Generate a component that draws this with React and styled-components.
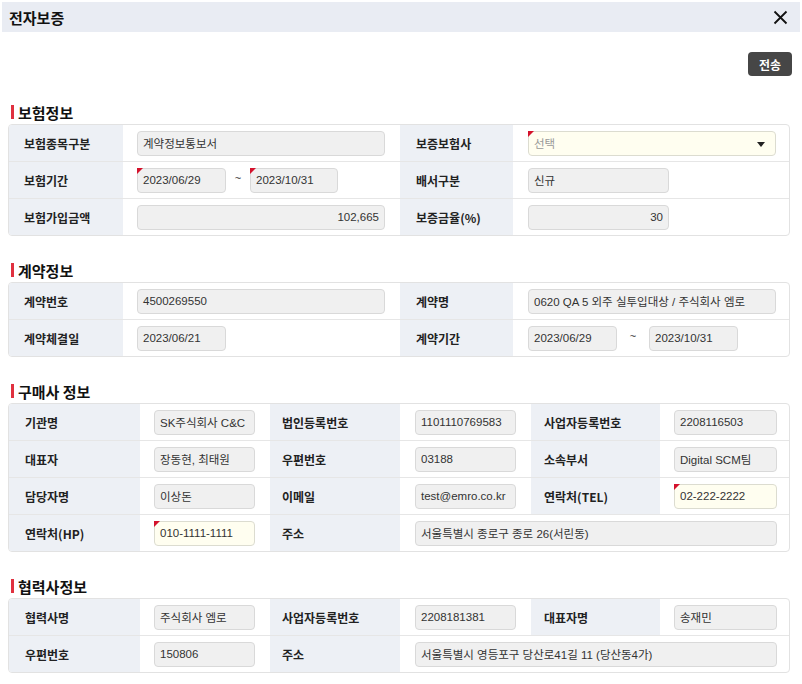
import React from "react";
import styled, { createGlobalStyle } from "styled-components";

const Global = createGlobalStyle`
  html, body { margin: 0; padding: 0; background: #fff; }
  body { font-family: "Liberation Sans", "Noto Sans CJK KR", sans-serif; color: #222; }
  * { box-sizing: border-box; }
`;

const Page = styled.div`
  width: 802px;
  height: 684px;
  padding: 2px 0 0 2px;
  overflow: hidden;
`;

const Header = styled.div`
  width: 798px;
  height: 30px;
  background: #e9ecf3;
  display: flex;
  align-items: center;
  justify-content: space-between;
  padding: 0 12px 0 7px;
`;

const Title = styled.h1`
  margin: 0;
  font-family: "Noto Sans CJK KR", sans-serif;
  font-size: 15px;
  font-weight: 700;
  color: #111;
`;

const CloseButton = styled.button`
  border: none;
  background: transparent;
  padding: 0;
  width: 15px;
  height: 15px;
  display: flex;
  cursor: pointer;
`;

const Toolbar = styled.div`
  width: 798px;
  display: flex;
  justify-content: flex-end;
  padding-right: 8px;
  margin-top: 20px;
`;

const SendButton = styled.button`
  width: 44px;
  height: 24px;
  border: none;
  border-radius: 4px;
  background: #464646;
  color: #fff;
  font-family: "Noto Sans CJK KR", sans-serif;
  font-weight: 700;
  font-size: 12px;
  padding: 0;
`;

const Content = styled.div`
  padding: 0 12px 0 6px;
`;

const Section = styled.section`
  margin-top: ${(p) => (p.$first ? 26 : 24)}px;
`;

const Heading = styled.h2`
  margin: 0 0 2px;
  height: 20px;
  display: flex;
  align-items: center;
  gap: 4px;
  padding-left: 3px;
  font-family: "Noto Sans CJK KR", sans-serif;
  font-size: 15px;
  font-weight: 700;
  color: #111;
  &::before {
    content: "";
    width: 3px;
    height: 14px;
    background: #e0313f;
  }
`;

const Table = styled.div`
  border: 1px solid #e2e2e2;
  border-radius: 4px;
  overflow: hidden;
`;

const Row = styled.div`
  display: grid;
  grid-template-columns: ${(p) => p.$cols};
  height: 36px;
  & + & { border-top: 1px solid #e6e6e6; height: 37px; }
`;

const Label = styled.div`
  background: #edf0f5;
  display: flex;
  align-items: center;
  padding-left: ${(p) => p.$pad ?? 15}px;
  font-family: "Noto Sans CJK KR", sans-serif;
  font-size: 12px;
  font-weight: 700;
  color: #222;
  white-space: nowrap;
`;

const Cell = styled.div`
  display: flex;
  align-items: center;
  padding: 0 ${(p) => p.$pr ?? 14}px 0 ${(p) => p.$pl ?? 14}px;
  grid-column: span ${(p) => p.$span ?? 1};
  min-width: 0;
`;

const Field = styled.div`
  position: relative;
  height: 25px;
  ${(p) => (p.$w ? `width: ${p.$w}px; flex: none;` : `flex: 1;`)}
  min-width: 0;
  display: flex;
  align-items: center;
  justify-content: ${(p) => (p.$right ? "flex-end" : "flex-start")};
  padding: 0 5px;
  border: 1px solid ${(p) => (p.$cream ? "#dcdcd0" : "#d9d9d9")};
  border-radius: 4px;
  background: ${(p) => (p.$cream ? "#fffef0" : "#f0f0f0")};
  font-size: 11.5px;
  color: ${(p) => (p.$placeholder ? "#999" : "#333")};
  white-space: nowrap;
`;

const Marker = styled.span`
  position: absolute;
  top: -1px;
  left: -1px;
  width: 0;
  height: 0;
  border-top: 6px solid #d4122c;
  border-right: 6px solid transparent;
`;

const Caret = styled.span`
  position: absolute;
  right: 10px;
  top: 10px;
  width: 0;
  height: 0;
  border-left: 4px solid transparent;
  border-right: 4px solid transparent;
  border-top: 5px solid #222;
`;

const Tilde = styled.span`
  width: ${(p) => p.$w}px;
  text-align: center;
  font-size: 11px;
  color: #333;
  flex: none;
  margin-top: -4px;
`;

const COLS4 = "114px 277px 113px 1fr";
const COLS6 = "131px 130px 130px 131px 129px 1fr";

function F({ children, mark, ...rest }) {
  return (
    <Field {...rest}>
      {mark && <Marker />}
      {children}
    </Field>
  );
}

export default function App() {
  return (
    <Page>
      <Global />
      <Header>
        <Title>전자보증</Title>
        <CloseButton aria-label="close">
          <svg width="15" height="15" viewBox="0 0 15 15">
            <path d="M1.5 1.5 L13.5 13.5 M13.5 1.5 L1.5 13.5" stroke="#111" strokeWidth="1.8" />
          </svg>
        </CloseButton>
      </Header>
      <Toolbar>
        <SendButton>전송</SendButton>
      </Toolbar>
      <Content>
        <Section $first>
          <Heading>보험정보</Heading>
          <Table>
            <Row $cols={COLS4}>
              <Label $pad={15}>보험종목구분</Label>
              <Cell $pr={15}><F>계약정보통보서</F></Cell>
              <Label $pad={16}>보증보험사</Label>
              <Cell $pl={15} $pr={13}>
                <F $cream $placeholder mark>선택<Caret /></F>
              </Cell>
            </Row>
            <Row $cols={COLS4}>
              <Label $pad={15}>보험기간</Label>
              <Cell>
                <F $w={89} mark>2023/06/29</F>
                <Tilde $w={24}>~</Tilde>
                <F $w={88} mark>2023/10/31</F>
              </Cell>
              <Label $pad={16}>배서구분</Label>
              <Cell $pl={15}><F $w={141}>신규</F></Cell>
            </Row>
            <Row $cols={COLS4}>
              <Label $pad={15}>보험가입금액</Label>
              <Cell $pr={15}><F $right>102,665</F></Cell>
              <Label $pad={16}>보증금율(%)</Label>
              <Cell $pl={15}><F $w={141} $right>30</F></Cell>
            </Row>
          </Table>
        </Section>

        <Section>
          <Heading>계약정보</Heading>
          <Table>
            <Row $cols={COLS4}>
              <Label $pad={15}>계약번호</Label>
              <Cell $pr={15}><F>4500269550</F></Cell>
              <Label $pad={16}>계약명</Label>
              <Cell $pl={15} $pr={13}><F>0620 QA 5 외주 실투입대상 / 주식회사 엠로</F></Cell>
            </Row>
            <Row $cols={COLS4}>
              <Label $pad={15}>계약체결일</Label>
              <Cell><F $w={89}>2023/06/21</F></Cell>
              <Label $pad={16}>계약기간</Label>
              <Cell $pl={15}>
                <F $w={89}>2023/06/29</F>
                <Tilde $w={32}>~</Tilde>
                <F $w={89}>2023/10/31</F>
              </Cell>
            </Row>
          </Table>
        </Section>

        <Section>
          <Heading>구매사 정보</Heading>
          <Table>
            <Row $cols={COLS6}>
              <Label $pad={16}>기관명</Label>
              <Cell $pr={15}><F>SK주식회사 C&amp;C</F></Cell>
              <Label $pad={12}>법인등록번호</Label>
              <Cell $pl={15} $pr={15}><F>1101110769583</F></Cell>
              <Label $pad={13}>사업자등록번호</Label>
              <Cell $pr={12}><F>2208116503</F></Cell>
            </Row>
            <Row $cols={COLS6}>
              <Label $pad={16}>대표자</Label>
              <Cell $pr={15}><F>장동현, 최태원</F></Cell>
              <Label $pad={12}>우편번호</Label>
              <Cell $pl={15} $pr={15}><F>03188</F></Cell>
              <Label $pad={13}>소속부서</Label>
              <Cell $pr={12}><F>Digital SCM팀</F></Cell>
            </Row>
            <Row $cols={COLS6}>
              <Label $pad={16}>담당자명</Label>
              <Cell $pr={15}><F>이상돈</F></Cell>
              <Label $pad={12}>이메일</Label>
              <Cell $pl={15} $pr={15}><F>test@emro.co.kr</F></Cell>
              <Label $pad={13}>연락처(TEL)</Label>
              <Cell $pr={12}><F $cream mark>02-222-2222</F></Cell>
            </Row>
            <Row $cols={COLS6}>
              <Label $pad={16}>연락처(HP)</Label>
              <Cell $pr={15}><F $cream mark>010-1111-1111</F></Cell>
              <Label $pad={12}>주소</Label>
              <Cell $span={3} $pl={15} $pr={12}><F>서울특별시 종로구 종로 26(서린동)</F></Cell>
            </Row>
          </Table>
        </Section>

        <Section>
          <Heading>협력사정보</Heading>
          <Table>
            <Row $cols={COLS6}>
              <Label $pad={16}>협력사명</Label>
              <Cell $pr={15}><F>주식회사 엠로</F></Cell>
              <Label $pad={12}>사업자등록번호</Label>
              <Cell $pl={15} $pr={15}><F>2208181381</F></Cell>
              <Label $pad={13}>대표자명</Label>
              <Cell $pr={12}><F>송재민</F></Cell>
            </Row>
            <Row $cols={COLS6}>
              <Label $pad={16}>우편번호</Label>
              <Cell $pr={15}><F>150806</F></Cell>
              <Label $pad={12}>주소</Label>
              <Cell $span={3} $pl={15} $pr={12}><F>서울특별시 영등포구 당산로41길 11 (당산동4가)</F></Cell>
            </Row>
          </Table>
        </Section>
      </Content>
    </Page>
  );
}
